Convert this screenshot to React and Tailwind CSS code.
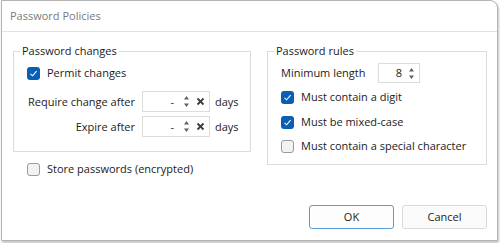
import React from "react";

const font = { fontFamily: '"Open Sans", "Noto Sans", sans-serif' };

function Check({ checked }) {
  if (checked) {
    return (
      <span className="flex h-[13px] w-[13px] shrink-0 items-center justify-center rounded-[3px] bg-[#0a5fb4]">
        <svg width="9" height="9" viewBox="0 0 9 9">
          <polyline points="1.5,4.8 3.6,6.8 7.6,2.2" fill="none" stroke="#ffffff" strokeWidth="1.1" />
        </svg>
      </span>
    );
  }
  return <span className="h-[13px] w-[13px] shrink-0 rounded-[3px] border border-[#9a9a9a] bg-[#f2f2f2]" />;
}

function Spin() {
  return (
    <svg width="7" height="15" viewBox="0 0 7 15">
      <polygon points="3.5,2 6,5.5 1,5.5" fill="#606060" />
      <polygon points="1,9.5 6,9.5 3.5,13" fill="#606060" />
    </svg>
  );
}

function XIcon() {
  return (
    <svg width="9" height="9" viewBox="0 0 9 9">
      <line x1="1.5" y1="1.5" x2="7.5" y2="7.5" stroke="#3c3c3c" strokeWidth="1.8" />
      <line x1="7.5" y1="1.5" x2="1.5" y2="7.5" stroke="#3c3c3c" strokeWidth="1.8" />
    </svg>
  );
}

function DaysInput() {
  return (
    <div className="flex h-[21px] w-[68px] items-center border border-[#dcdcdc] bg-white pr-[4px]">
      <span className="ml-auto text-[#333]">-</span>
      <span className="ml-[9px] flex items-center"><Spin /></span>
      <span className="ml-[6px] flex items-center"><XIcon /></span>
    </div>
  );
}

function CheckRow({ checked, label, className = "" }) {
  return (
    <div className={"flex h-[20px] items-center " + className}>
      <Check checked={checked} />
      <span className="ml-[7px] whitespace-nowrap">{label}</span>
    </div>
  );
}

export default function App() {
  return (
    <div className="h-[243px] w-[500px] bg-white text-[11px] leading-[16px] text-[#1b1b1b]" style={font}>
      <div className="ml-[1px] flex h-[241px] w-[497px] flex-col rounded-tr-[8px] border border-[#b4b4b4] bg-white shadow-[1px_2px_3px_rgba(0,0,0,0.25)]">
        <div className="flex h-[31px] items-center border-b border-[#e3e3e3] pl-[8px] text-[11px] text-[#7a7a7a]">
          Password Policies
        </div>
        <div className="flex flex-1 pl-[11px] pt-[11px]">
          <div className="flex w-[238px] flex-col">
            <fieldset className="border border-[#dcdcdc] px-[6px] pb-[14px]">
              <legend className="px-[2px]">Password changes</legend>
              <div className="ml-[7px]">
                <CheckRow checked label="Permit changes" className="mt-[4px]" />
                <div className="mt-[8px] flex h-[21px] items-center">
                  <span className="w-[108px] whitespace-nowrap text-right">Require change after</span>
                  <span className="ml-[7px]"><DaysInput /></span>
                  <span className="ml-[5px]">days</span>
                </div>
                <div className="mt-[4px] flex h-[21px] items-center">
                  <span className="w-[108px] whitespace-nowrap text-right">Expire after</span>
                  <span className="ml-[7px]"><DaysInput /></span>
                  <span className="ml-[5px]">days</span>
                </div>
              </div>
            </fieldset>
            <CheckRow label="Store passwords (encrypted)" className="ml-[14px] mt-[7px]" />
          </div>
          <div className="ml-[16px] w-[220px]">
            <fieldset className="border border-[#dcdcdc] px-[6px] pb-[8px]">
              <legend className="px-[2px]">Password rules</legend>
              <div className="ml-[7px]">
                <div className="mt-[4px] flex h-[20px] items-center">
                  <span className="w-[97px] whitespace-nowrap">Minimum length</span>
                  <div className="flex h-[20px] w-[42px] items-center border border-[#dcdcdc] pr-[4px]">
                    <span className="ml-auto">8</span>
                    <span className="ml-[6px] flex items-center"><Spin /></span>
                  </div>
                </div>
                <CheckRow checked label="Must contain a digit" className="mt-[4px]" />
                <CheckRow checked label="Must be mixed-case" className="mt-[5px]" />
                <CheckRow label="Must contain a special character" className="mt-[4px]" />
              </div>
            </fieldset>
          </div>
        </div>
        <div className="flex justify-end gap-[8px] pb-[11px] pr-[10px]">
          <button className="h-[24px] w-[85px] rounded-[3px] border border-[#5b9ad9] bg-[#fdfdfd]">OK</button>
          <button className="h-[24px] w-[85px] rounded-[3px] border border-[#d9d9d9] bg-[#fbfbfb]">Cancel</button>
        </div>
      </div>
    </div>
  );
}
